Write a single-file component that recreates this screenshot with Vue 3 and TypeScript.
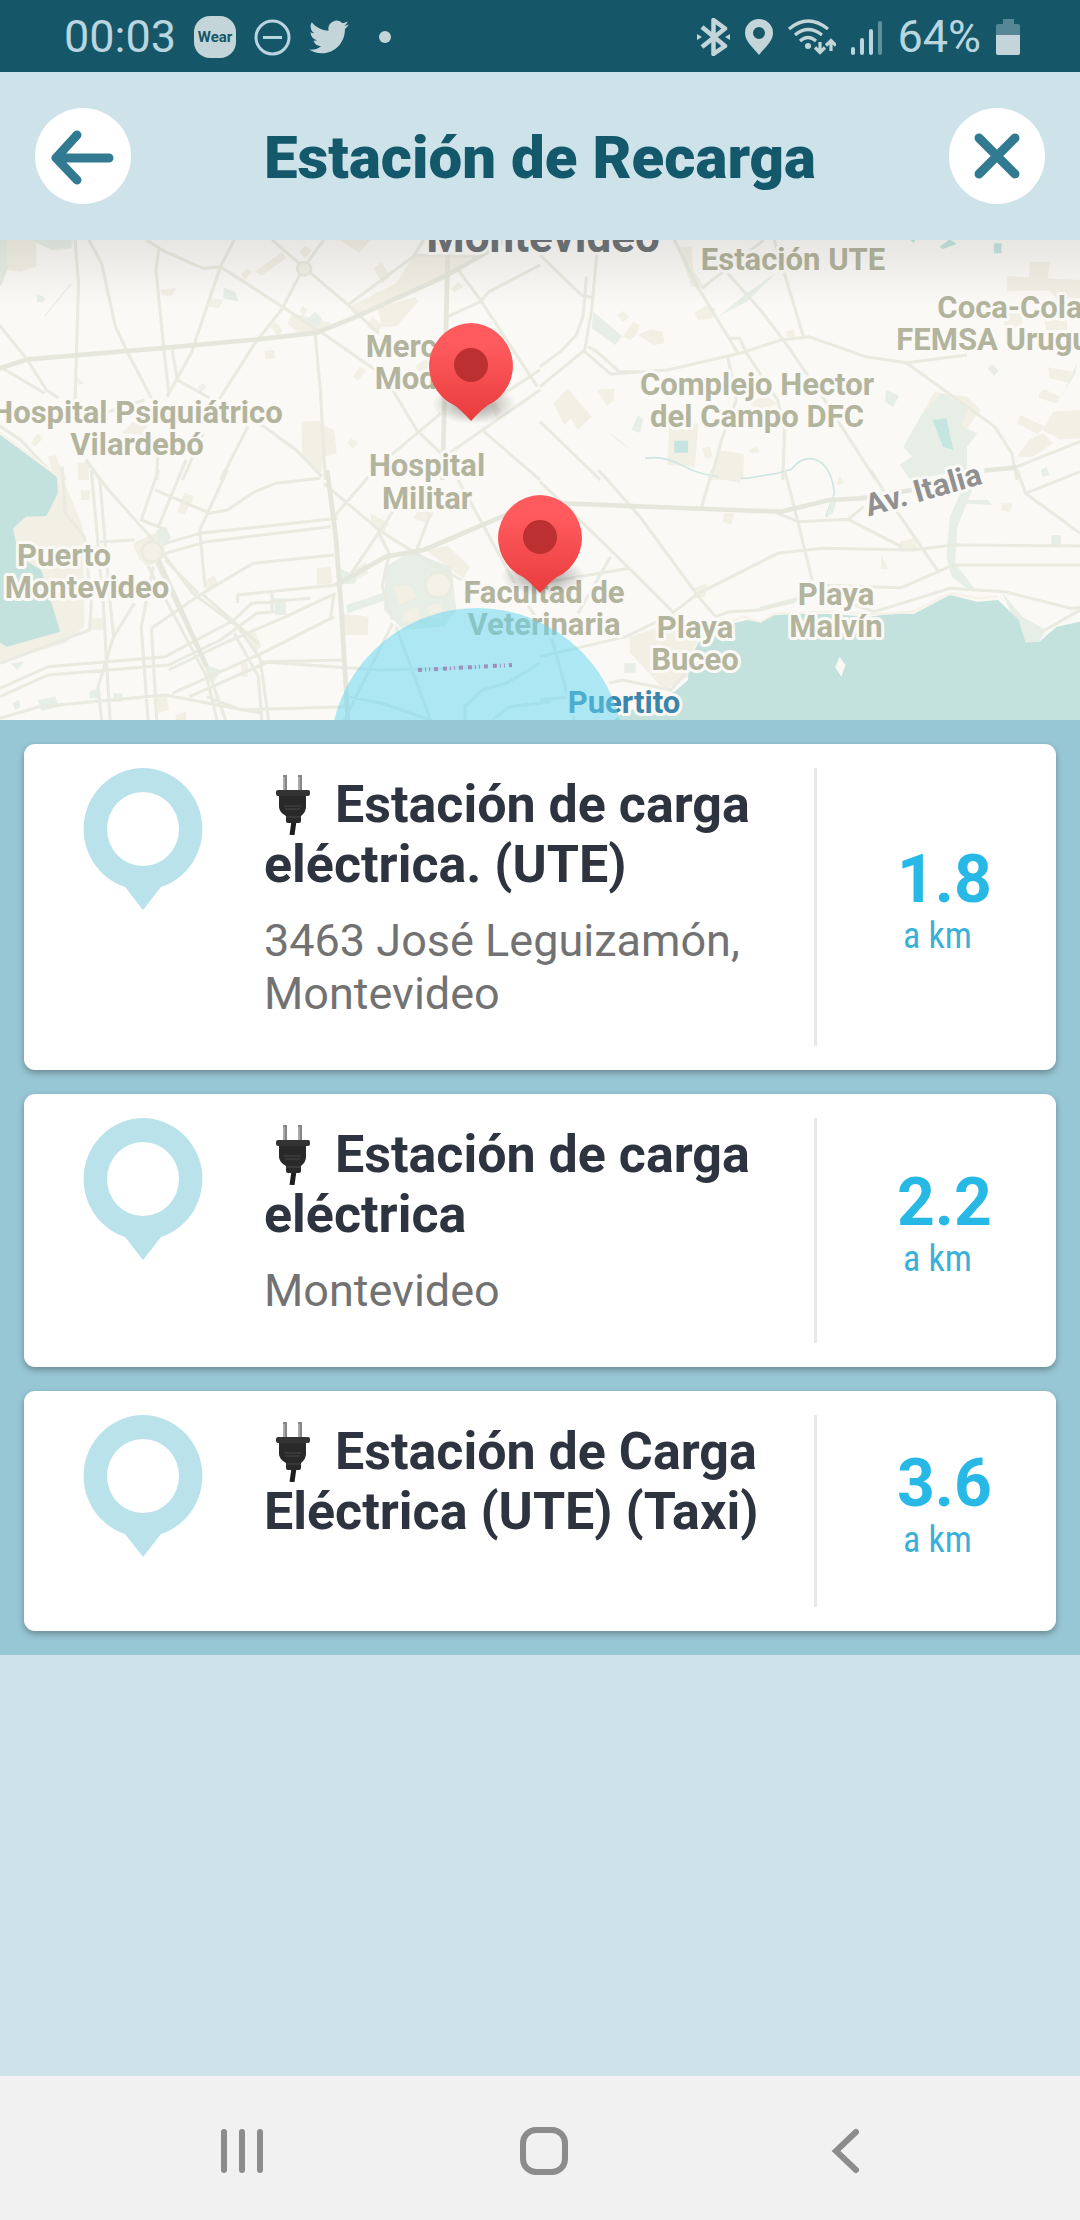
<script setup lang="ts">
interface Station {
  id: number
  name: string
  address: string
  distance: string
}

interface MapLabel {
  text: string
  x: number
  y: number
  kind?: string
}

const stations: Station[] = [
  { id: 1, name: 'Estación de carga eléctrica. (UTE)', address: '3463 José Leguizamón, Montevideo', distance: '1.8' },
  { id: 2, name: 'Estación de carga eléctrica', address: 'Montevideo', distance: '2.2' },
  { id: 3, name: 'Estación de Carga Eléctrica (UTE) (Taxi)', address: '', distance: '3.6' },
]

const labels: MapLabel[] = [
  { text: 'Montevideo', x: 543, y: 12, kind: 'city' },
  { text: 'Estación UTE', x: 793, y: 30 },
  { text: 'Mercado', x: 427, y: 117 },
  { text: 'Modelo', x: 427, y: 149 },
  { text: 'Hospital Psiquiátrico', x: 137, y: 183 },
  { text: 'Vilardebó', x: 137, y: 215 },
  { text: 'Hospital', x: 427, y: 236 },
  { text: 'Militar', x: 427, y: 269 },
  { text: 'Complejo Hector', x: 757, y: 155 },
  { text: 'del Campo DFC', x: 757, y: 187 },
  { text: 'Coca-Cola', x: 1010, y: 78 },
  { text: 'FEMSA Uruguay', x: 1009, y: 110 },
  { text: 'Puerto', x: 64, y: 326 },
  { text: 'Montevideo', x: 87, y: 358 },
  { text: 'Facultad de', x: 544, y: 363 },
  { text: 'Veterinaria', x: 544, y: 395 },
  { text: 'Playa', x: 695, y: 398 },
  { text: 'Buceo', x: 695, y: 430 },
  { text: 'Playa', x: 836, y: 365 },
  { text: 'Malvín', x: 836, y: 397 },
  { text: 'Puertito', x: 624, y: 473, kind: 'harbor' },
]

const markers = [
  { id: 1, x: 471, y: 126 },
  { id: 2, x: 540, y: 298 },
]
</script>

<template>
  <div class="screen">
    <div class="status">
      <div class="status-group">
        <span class="status-text">00:03</span>
        <span class="wear">Wear</span>
        <svg width="37" height="37" viewBox="0 0 37 37" fill="none" stroke="#b9d5df" stroke-width="3">
          <circle cx="18.500" cy="18.500" r="16.500" /><path d="M9 18.500H28" />
        </svg>
        <svg width="40" height="34" viewBox="0 2 24 20" fill="#c3d5d9">
          <path d="M23.950 4.570a10 10 0 0 1-2.820.77 4.960 4.960 0 0 0 2.160-2.720c-.95.550-2 .95-3.120 1.180a4.920 4.920 0 0 0-8.380 4.480C7.690 8.090 4.070 6.130 1.640 3.160a4.820 4.820 0 0 0-.67 2.480c0 1.710.87 3.210 2.190 4.100a4.900 4.900 0 0 1-2.230-.62v.06a4.920 4.920 0 0 0 3.950 4.830 5 5 0 0 1-2.210.08 4.940 4.940 0 0 0 4.600 3.420A9.870 9.870 0 0 1 0 19.540a13.990 13.990 0 0 0 7.550 2.210c9.050 0 14-7.500 14-13.980 0-.21 0-.42-.02-.63a9.940 9.940 0 0 0 2.420-2.570z" />
        </svg>
        <span class="dot"></span>
      </div>
      <div class="status-group right">
        <svg width="33" height="38" viewBox="0 0 33 38" fill="none" stroke="#c3d5d9" stroke-width="4.500" stroke-linejoin="round">
          <path d="M5 9 28 28 16.500 36V2L28 10.500 5 29" />
          <path d="M0 16l5 3-5 3zM33 16l-5 3 5 3z" fill="#c3d5d9" stroke="none" />
        </svg>
        <svg width="28" height="36" viewBox="0 0 28 36" fill="#c3d5d9">
          <path fill-rule="evenodd" d="M14 0A14 14 0 0 0 0 14C0 23 9 29 14 36 19 29 28 23 28 14A14 14 0 0 0 14 0ZM14 8A6 6 0 1 1 14 20 6 6 0 0 1 14 8Z" />
        </svg>
        <svg width="48" height="36" viewBox="0 0 48 36" fill="none" stroke="#c3d5d9" stroke-width="3.200">
          <path d="M1 10Q20-6 40 10M7 16Q20 5 34 16M12 22Q20 15 28 22" />
          <circle cx="20" cy="27" r="3" fill="#c3d5d9" stroke="none" />
          <path d="M32 23V33M27 28.500l5 5 5-5M43 32V22M38 26.500l5-5 5 5" />
        </svg>
        <svg width="31" height="35" viewBox="0 0 31 35" stroke="#b9d5df" stroke-width="4" stroke-linecap="round">
          <path d="M2 29v4M11 20v13M20 11v22" /><path d="M29 3v30" opacity=".45" />
        </svg>
        <span class="status-text">64%</span>
        <svg width="24" height="36" viewBox="0 0 24 36">
          <path d="M7 0H18V5H22Q24 5 24 7V16H0V7Q0 5 2 5H7Z" fill="#558796" />
          <path d="M0 16H24V34Q24 36 22 36H2Q0 36 0 34Z" fill="#c3d5d9" />
        </svg>
      </div>
    </div>

    <header class="header">
      <button class="round" type="button" aria-label="Volver">
        <svg width="96" height="96" viewBox="0 0 96 96" fill="none" stroke="#317a91" stroke-width="9" stroke-linecap="round" stroke-linejoin="round">
          <path d="M42 27 21 50 42 72M22 50H74" />
        </svg>
      </button>
      <h1>Estación de Recarga</h1>
      <button class="round" type="button" aria-label="Cerrar">
        <svg width="96" height="96" viewBox="0 0 96 96" fill="none" stroke="#317a91" stroke-width="9" stroke-linecap="round">
          <path d="M30 30 66 66M66 30 30 66" />
        </svg>
      </button>
    </header>

    <div class="map">
      <svg class="map-art" viewBox="0 0 1080 480" preserveAspectRatio="xMidYMid slice">
        <defs>
          <linearGradient id="pinFill" x1="0" y1="0" x2="0" y2="1">
            <stop offset="0.200" stop-color="#ff5b5e" /><stop offset="1" stop-color="#e93c3d" />
          </linearGradient>
          <radialGradient id="pinShade">
            <stop offset="0" stop-color="#000" stop-opacity=".4" /><stop offset="1" stop-color="#000" stop-opacity="0" />
          </radialGradient>
        </defs>

        <!-- north west -->
        <g transform="translate(0 -10) scale(.3444 .3333)">
          <g class="block">
            <path d="M20 30H105V110L60 125 20 120ZM110 30H210V55L160 62ZM740 125 820 65 830 85 760 137ZM985 30H1075L1045 68ZM1085 115 1108 97 1133 140 1110 160ZM1015 230 1150 160 1200 80 1370 80 1290 140 1030 260ZM1110 290 1095 235 1205 200 1215 215 1150 290ZM465 180 512 173 500 198 470 195ZM612 205 648 210 635 235 608 230ZM785 290 800 275 822 300 808 320ZM850 250 965 280 930 310 870 315 835 280ZM768 362 797 360 798 385 772 388ZM1025 440 1045 412 1063 418 1040 452ZM875 575 925 572 945 590 970 600 978 670 940 680 930 740 878 675ZM355 610 385 575 430 580 420 615ZM90 640 108 610 125 625 102 650ZM140 680 160 675 195 750H160ZM225 700 258 695V750H228ZM575 470 592 460 600 475 580 485ZM222 440 245 460 228 465ZM1008 640 1020 625 1040 640 1025 655ZM1425 525 1440 515 1455 545 1440 565ZM1205 410 1235 385 1260 430 1225 430ZM1065 290 1080 260 1110 285 1095 310Z" />
            <path d="M700 135 715 115 733 125 710 150ZM870 65 885 48 905 60 885 85ZM870 240 880 228 893 240 880 260ZM1310 175 1330 155 1345 170 1320 188Z" />
          </g>
          <path class="park" d="M0 30H20V120L0 150ZM90 30H205V50L150 60ZM107 193 120 197 131 205 125 217 108 215ZM650 173 682 185 693 215 648 205ZM890 270 915 245 935 265 925 290Z" />
          <path class="minor" d="M218 30 228 160 218 510M258 30 295 100 335 290 372 370 440 505M462 50 453 120 475 350 490 490M500 360 515 450 610 505M680 30 640 110 555 370 485 500M425 30 480 65 590 115 640 110 820 230 930 305 1090 420M790 30 880 110 1000 215 1100 310M940 30 880 115 820 235 740 340 635 510M915 310 930 480 945 750M-10 275 80 390 135 480 170 505M0 410 130 490M-5 585 60 630 160 740M0 165 20 110M1230 30 1200 80 1010 225M1330 120 1395 210 1560 470M1568 105 1420 185 1395 215 1300 260M1568 420 1360 560M1280 550 1130 680M1140 480 1210 600 1290 680 1568 480M1400 600 1568 750M720 590 640 750M740 570 860 660 935 740M460 630 455 750M590 610 530 750M250 690 290 750M300 550 420 510M1200 75 1400 80" />
          <path class="major" d="M-10 418 80 388 460 355 750 328 920 308 1030 262 1290 140 1400 75 1480 20M1300 60 1295 300 1285 750" />
          <circle cx="883" cy="116" r="20" class="ring" />
          <path d="M130 258 205 163" class="path" />
        </g>

        <!-- north east -->
        <g transform="translate(540 -10) scale(.3444 .3333)">
          <path class="block" d="M1423 95H1480L1475 138H1420ZM1357 138 1568 150V205L1500 205 1475 180 1355 183ZM1420 138H1475V182H1420ZM40 520 80 475 150 560 110 600 90 565 70 585ZM165 480 215 475 215 510 195 528ZM375 585 460 580 450 710 370 705ZM515 660 592 672 590 750H500ZM225 255 240 243 260 260 240 275ZM240 320 270 275 290 285 280 315 260 330ZM285 315 320 298 355 305 362 340 330 345ZM448 250 480 228 510 235 500 265 460 270ZM400 50 440 50 445 120 480 175 440 170ZM1100 570 1145 485 1240 500 1280 540 1215 630ZM1475 412 1545 425 1535 458 1480 445ZM1450 490 1465 478 1510 500 1500 520 1448 505ZM1490 545 1568 540V625L1510 628 1460 600ZM1395 555 1465 590 1445 612 1385 580ZM1385 680 1420 630 1460 610 1490 640 1430 680ZM470 655 495 650 500 680 480 685ZM610 520 650 495 690 520 640 545ZM715 303 738 300 740 322 718 320ZM605 660 630 650 637 665 615 670ZM1340 250H1400V290H1350ZM1465 270H1530V300H1470Z" />
          <path class="park" d="M155 245 238 318 218 345 150 295ZM1055 650 1105 560 1165 490 1240 530 1225 590 1270 610 1240 650V720L1075 750 1045 705 1080 680ZM1005 480 1043 498 1025 530 1002 515ZM265 600 285 555 300 570 290 608ZM195 605 230 628 262 660ZM520 258 600 190 685 130 600 215ZM1300 415 1313 403 1332 422 1318 438ZM1520 490 1558 400 1555 430 1500 520ZM1455 720 1470 710 1480 735 1460 740Z" />
          <path d="M1140 570 1180 565 1200 660 1170 650ZM1160 50 1190 28 1210 42 1170 57ZM1318 40H1340V70H1318ZM1075 30H1090L1085 40ZM390 632H430V668H390Z" fill="#c5e5e0" />
          <path class="minor" d="M0 75 120 195 150 203M165 70 150 240 130 360 0 470M135 140 125 260 105 315 60 365 0 410M130 365 205 432 370 420 580 370 700 330 780 320 945 380 1065 398 1240 375M140 350 165 365 230 425 300 425M390 30 460 175 575 370M545 130 640 240 710 335 820 500 975 750M650 30 470 175M680 30 765 320M550 325H580L600 370 690 510 710 600 705 750M545 380 570 510 530 620 495 750M1065 400 1220 515 1320 590 1370 670 1385 750M0 575 175 750M1385 710 1568 635" />
          <path class="major" d="M1290 722 1385 712" />
          <path class="river" d="M305 685Q360 675 420 710T600 745L690 730 730 718Q770 665 820 700 850 730 855 790L830 860" />
        </g>

        <!-- south west -->
        <g transform="translate(0 230) scale(.3444 .3333)">
          <path class="block" d="M165 -20 240 170 245 470 190 520 0 575V130L75 140 130 130ZM385 220 470 180 480 260 430 290 405 270ZM920 295 960 290 965 340 920 345ZM985 430 1070 440 1068 495 1005 495ZM515 125 535 68 565 80 535 135ZM1235 240 1300 228 1365 290 1345 325ZM1075 130 1130 160 1115 190 1080 165ZM1225 100 1260 130 1240 160 1200 145ZM590 340 620 315 635 345 600 360ZM1030 300 1060 275 1070 310 1040 325ZM455 680H485L490 720 460 730ZM235 60H260V90H235ZM265 445H300V480H265ZM700 570 720 580V620H700ZM510 735 540 725V750H510ZM715 500 740 485 760 530 740 545Z" />
          <path class="park" d="M455 180 480 170 497 200 480 230 455 210ZM1120 290 1190 245 1310 290 1325 420 1290 470 1170 480 1115 420ZM1005 405 1110 370 1120 390 1010 430ZM795 385H830V435H800ZM110 690 160 680 172 710 120 722ZM975 290 1040 320 1030 340 980 345ZM30 580 70 575 50 600ZM330 670H355V695H330ZM260 665 285 655V685H260ZM35 700 55 690 60 710 45 720ZM600 585 640 600 620 640 600 610Z" />
          <path class="block" d="M1240 310H1300L1315 350 1280 375 1235 360ZM1145 350 1190 345 1210 380 1160 405ZM1240 410 1280 400 1285 450 1250 440ZM1175 420 1215 410 1220 450 1170 455Z" />
          <path class="sea" d="M-5 -110 100 -30 165 20 168 70 135 138 75 140 38 175 55 260 120 300 175 485 20 530 -5 515Z" />
          <path class="coast" d="M-5 -115 100 -35 170 20 185 80" />
          <path class="minor" d="M250 -30 315 60 445 210 480 260 560 370 690 470 755 565 780 750M460 0 410 150 485 180M540 -30 460 170M660 0 580 180 595 350M450 60 610 130 660 120 740 65 800 40 930 25M480 220 580 190 980 145M480 250 600 215 960 170M940 40 1100 180 1200 245 1340 330M440 475 580 375 735 280 970 255M975 345 690 375V400M975 370 830 440 650 520 490 600M445 290 410 470 430 750M440 475 455 750M455 280 600 590 655 750M430 290 600 620 630 750M480 270 575 370M1250 130 1210 240M1070 20 970 140M1170 80 1020 310M1100 190 1130 250 1110 350 1140 450M0 580 260 480 265 400 245 200 190 130 180 -10M265 0 300 400 310 590 320 750M290 30 320 400 330 500M290 215 390 210M390 400 330 500 285 650 295 750M0 655 140 590 480 560 680 450 730 400 900 385M0 680 140 615 490 585 640 510 745 430 800 425M0 745 115 710 480 675 760 730M500 670 760 550 970 440M550 680 780 575 1000 570M760 575 1100 600 1300 595 1400 590M680 490 750 620 760 750M600 680 700 720 1000 710M1010 680 1110 700 1250 750M1150 470 1250 750M1140 460 1000 750M1350 750V710L1400 660 1470 640 1568 580M1430 750 1480 710 1600 695M1330 30 1400 160 1500 350 1590 500M585 370 750 520M970 370 960 440M790 370V430" />
          <path class="major" d="M950 0 975 200 990 400 1010 750M975 345 1120 260 1230 240 1480 130M460 270 600 590M430 750" />
          <circle cx="1273" cy="345" r="38" class="ring" />
          <circle cx="442" cy="245" r="30" class="ring" />
        </g>

        <!-- south east -->
        <g transform="translate(540 230) scale(.3444 .3333)">
          <path class="block" d="M260 500 380 460 460 490 430 620 360 660 260 545ZM510 0H590L580 40 520 25ZM535 130H565L555 165 530 155ZM990 255 1012 298H990ZM1045 215 1085 205 1100 240H1040ZM1340 100H1372L1365 125 1340 122ZM860 45 870 15 885 40ZM445 355 485 340 480 380 450 385Z" />
          <path class="park" d="M1230 50 1255 60 1212 170 1205 280 1265 360 1240 355 1195 320 1180 260 1190 140ZM1235 90H1300L1312 105 1230 100ZM1485 195H1512V225H1485ZM640 410 750 380 740 400 630 425ZM245 580H278V608H245ZM830 145 850 75 862 90 850 130ZM1340 365 1400 440 1470 480 1440 530 1410 520Z" />
          <path class="sea" d="M430 610Q440 510 500 475L600 450 640 455 680 432 840 432 960 440 1020 430 1085 432 1190 375 1270 395 1330 390 1390 450 1410 518 1450 515 1500 470 1568 455V760H205L230 735 390 665 430 630Z" />
          <path class="coast" d="M430 610Q440 510 500 475L590 440 640 455 680 432 840 425 970 432 1020 430 1085 425 1190 370 1270 385 1330 380" />
          <path d="M870 560 887 585 875 620 857 592Z" fill="#faf8f3" />
          <path class="minor" d="M0 35 210 245 390 430M170 0 290 140 460 380 510 440M500 0 470 110M710 0 750 160 790 330M390 425 460 370 690 250 820 235 1080 240 1200 225 1568 228M690 130 750 155 895 148 940 110M895 148 1050 230M960 0 1040 130 1160 310M800 345 1050 353 1200 285 1568 285M510 440 550 425 640 420 750 385M900 400 970 425 1050 400 1190 355 1350 365 1540 415 1580 412M1385 0 1410 70 1568 190M1410 70 1568 5M0 340 260 295M205 260 110 430M390 430 250 500 0 560M200 640 240 630 380 660 430 600M30 490 100 750M0 690 90 680M1450 490 1568 420" />
          <path class="major" d="M70 100 560 120 700 125 840 90 930 85 1080 60" />
        </g>

        <g class="labels">
          <text v-for="(label, i) in labels" :key="i" :x="label.x" :y="label.y" :class="label.kind">{{ label.text }}</text>
          <text class="road-name" x="0" y="0" transform="translate(926 260) rotate(-16)">Av. Italia</text>
        </g>

        <circle cx="477" cy="515" r="147" fill="#5fd5f2" fill-opacity=".5" />
        <path d="M418 430 512 425" stroke="#9d8fbd" stroke-width="4" stroke-dasharray="4 3 1 3 1 4 4 5" fill="none" />

        <g v-for="m in markers" :key="m.id" :transform="`translate(${m.x} ${m.y})`">
          <ellipse cx="3" cy="38" rx="42" ry="20" fill="url(#pinShade)" />
          <path d="M0 -43A43 43 0 0 1 17 39Q11 43 0 55 -11 43 -17 39A43 43 0 0 1 0 -43Z" fill="url(#pinFill)" />
          <circle cx="0" cy="-1" r="17" fill="#bd3031" />
        </g>
      </svg>
    </div>

    <main class="list">
      <article v-for="station in stations" :key="station.id" class="card">
        <div class="pin">
          <svg width="120" height="142" viewBox="0 0 120 142" fill="#bae2eb">
            <path fill-rule="evenodd" d="M60 0A60 61 0 0 1 78 119L60 142 42 119A60 61 0 0 1 60 0ZM60 24A36 37 0 1 0 60 98 36 37 0 0 0 60 24Z" />
          </svg>
        </div>
        <div class="info">
          <h2>
            <svg class="plug" width="58" height="60" viewBox="0 0 58 60">
              <path d="M21 1V17M36 1V17" stroke="#858585" stroke-width="4" stroke-linecap="round" />
              <path d="M20 2V16M35 2V16" stroke="#d0d0d0" stroke-width="1" />
              <path d="M30 46 28 60" stroke="#1d1d1d" stroke-width="5" />
              <path d="M15 20H42V32Q42 37 37 41V46Q37 48 35 48H24Q22 48 22 46V41Q15 37 15 32Z" fill="#292929" />
              <rect x="12" y="15" width="34" height="6" rx="2" fill="#333" />
              <path d="M20 31H37M21 34H36M22 42H37" stroke="#484848" stroke-width="1" />
            </svg>
            {{ station.name }}
          </h2>
          <p>{{ station.address }}</p>
        </div>
        <div class="distance">
          <strong>{{ station.distance }}</strong>
          <span>a km</span>
        </div>
      </article>
    </main>

    <nav class="nav">
      <button type="button" aria-label="Recientes">
        <svg width="48" height="48" viewBox="0 0 48 48" stroke="#8c8c8c" stroke-width="6" stroke-linecap="round"><path d="M6 5V43M24 5V43M42 5V43" /></svg>
      </button>
      <button type="button" aria-label="Inicio">
        <svg width="48" height="48" viewBox="0 0 48 48" fill="none" stroke="#8c8c8c" stroke-width="6"><rect x="3" y="3" width="42" height="42" rx="13" /></svg>
      </button>
      <button type="button" aria-label="Atrás">
        <svg width="48" height="48" viewBox="0 0 48 48" fill="none" stroke="#8c8c8c" stroke-width="6" stroke-linecap="round"><path d="M34 5 14 24 34 43" /></svg>
      </button>
    </nav>
  </div>
</template>

<style>
body {
  background: #cee3e9;
}
</style>

<style scoped>
* {
  box-sizing: border-box;
}

.screen {
  display: flex;
  flex-direction: column;
  min-height: 100vh;
  background: #cee3e9;
  font-family: Roboto, "Noto Sans", sans-serif;
}

svg {
  display: block;
  flex: none;
}

button {
  padding: 0;
  border: 0;
  background: none;
}

.status {
  display: flex;
  justify-content: space-between;
  align-items: center;
  height: 72px;
  padding: 2px 60px 0 64px;
  background: #155769;
}

.status-group {
  display: flex;
  align-items: center;
  gap: 18px;
}

.status-group.right {
  gap: 15px;
}

.status-text {
  color: #b9d5df;
  font-size: 45px;
  line-height: 54px;
}

.wear {
  width: 42px;
  height: 42px;
  border-radius: 16px;
  background: #c3d5d9;
  color: #155769;
  font-size: 15px;
  font-weight: 700;
  line-height: 43px;
  text-align: center;
}

.dot {
  width: 12px;
  height: 12px;
  margin-left: 12px;
  border-radius: 50%;
  background: #c3d5d9;
}

.header {
  display: flex;
  justify-content: space-between;
  align-items: center;
  height: 168px;
  padding: 0 35px;
}

.header h1 {
  margin: 0;
  padding-top: 4px;
  color: #14586b;
  font-size: 60px;
  font-weight: 900;
  line-height: 72px;
}

.round {
  width: 96px;
  height: 96px;
  border-radius: 50%;
  background: #fff;
}

.map {
  position: relative;
  height: 480px;
  overflow: hidden;
  background: #faf9f5;
}

.map::after {
  content: "";
  position: absolute;
  inset: 0 0 auto;
  height: 66px;
  background: linear-gradient(rgba(0, 0, 0, 0.08), rgba(0, 0, 0, 0));
}

.map-art {
  width: 100%;
  height: 100%;
}

.minor {
  fill: none;
  stroke: #e9eae0;
  stroke-width: 9;
  stroke-linejoin: round;
}

.major {
  fill: none;
  stroke: #e6e7dc;
  stroke-width: 14;
  stroke-linejoin: round;
}

.ring {
  fill: #f3f1e7;
  stroke: #e9eae0;
  stroke-width: 8;
}

.path {
  fill: none;
  stroke: #eceee8;
  stroke-width: 5;
}

.river {
  fill: none;
  stroke: #cde6e3;
  stroke-width: 5;
}

.block {
  fill: #f2efe5;
}

.park {
  fill: #e6eee5;
}

.sea {
  fill: #c4e2dd;
}

.coast {
  fill: none;
  stroke: #f6f2e8;
  stroke-width: 7;
}

.labels text {
  fill: #b3b49d;
  stroke: #faf9f5;
  stroke-width: 6px;
  stroke-linejoin: round;
  paint-order: stroke;
  font-size: 31px;
  font-weight: 700;
  text-anchor: middle;
}

.labels .city {
  fill: #70757a;
  font-size: 44px;
}

.labels .harbor {
  fill: #3a85ab;
}

.labels .road-name {
  fill: #919191;
}

.list {
  display: flex;
  flex-direction: column;
  gap: 24px;
  padding: 24px;
  background: #97c6d4;
}

.card {
  display: flex;
  min-height: 240px;
  padding: 24px;
  border-radius: 11px;
  background: #fff;
  box-shadow: 0 3px 6px rgba(0, 0, 0, 0.3);
}

.pin {
  display: flex;
  justify-content: center;
  flex: none;
  width: 189px;
}

.info {
  flex: 1;
  padding: 7px 28px 26px 27px;
}

.info h2 {
  margin: 0 0 19px;
  color: #2d3440;
  font-size: 52px;
  font-weight: 700;
  line-height: 60px;
}

.plug {
  display: inline-block;
  vertical-align: top;
}

.info p {
  margin: 0;
  color: #727272;
  font-size: 45px;
  line-height: 53px;
}

.distance {
  display: flex;
  flex-direction: column;
  justify-content: center;
  flex: none;
  width: 218px;
  padding: 0 0 14px 80px;
  border-left: 3px solid #e8e8e8;
  color: #27b8e6;
}

.distance strong {
  font-size: 66px;
  line-height: 72px;
}

.distance span {
  padding-left: 6px;
  color: #3ab0d8;
  font-family: "Roboto Condensed", Roboto, sans-serif;
  font-size: 36px;
  line-height: 41px;
}

.nav {
  display: grid;
  grid-template-columns: repeat(3, 1fr);
  height: 144px;
  margin-top: auto;
  padding: 6px 83px 0 91px;
  background: #f1f1f1;
}

.nav button {
  display: flex;
  justify-content: center;
  align-items: center;
}
</style>
